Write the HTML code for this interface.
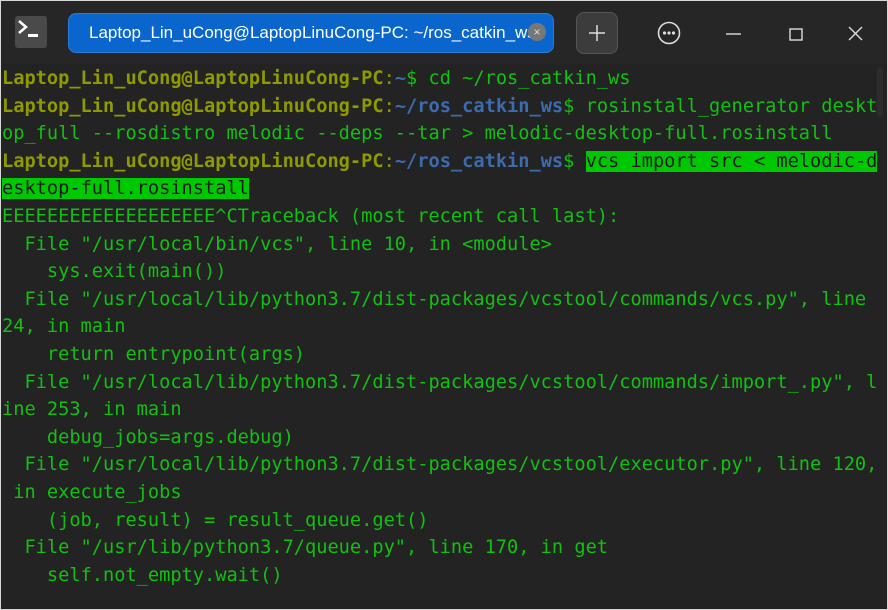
<!DOCTYPE html>
<html><head><meta charset="utf-8"><style>
html,body{margin:0;padding:0;width:888px;height:610px;overflow:hidden;background:#d8d8d8}
.win{position:absolute;left:1px;top:1px;width:886px;height:608px;background:#232323}
.tb{position:absolute;left:0;top:0;width:886px;height:63px;background:#262626}
.ico{position:absolute;left:14px;top:15px;width:32px;height:32px;background:#4a4a4a;border-radius:3px}
.tab{position:absolute;left:67px;top:12px;width:486px;height:40px;background:#0a66cc;border-radius:8px;border:1px solid #2a7ad8;box-sizing:border-box;color:#fff;font:17px "Liberation Sans",sans-serif;line-height:38px;padding-left:20px;white-space:nowrap;overflow:hidden}
.tab .x{position:absolute;left:459px;top:9px;width:18px;height:18px;border-radius:50%;background:#777;color:#ddd;font-size:12px;line-height:18px;text-align:center}
.plus{position:absolute;left:575px;top:11px;width:42px;height:42px;background:#3c3c3c;border:1px solid #555;border-radius:8px;box-sizing:border-box}
.term{position:absolute;left:1px;top:64px;font-family:"DejaVu Sans Mono","Liberation Mono",monospace;font-size:18.65px;line-height:27.6px;color:#12c012;white-space:pre}
.u{color:#8f9a00;font-weight:bold}.p{color:#3d6bb0;font-weight:bold}.c{color:#8f9a00}
.h{background:#00c800;color:#1a1a1a}
.sb{position:absolute;left:876px;top:66px;width:6px;height:50px;background:#2c2c2c;border-radius:3px}
</style></head><body><div class="win">
<div class="tb">
<div class="ico"><svg width="32" height="32"><path d="M4 5 L11 11 L4 17" stroke="#fff" stroke-width="2.5" fill="none"/><rect x="13" y="18" width="10" height="3" fill="#fff"/></svg></div>
<div class="tab">Laptop_Lin_uCong@LaptopLinuCong-PC: ~/ros_catkin_ws<span class="x">×</span></div>
<div class="plus"><svg width="40" height="40"><path d="M20 12V28M12 20H28" stroke="#ddd" stroke-width="1.5"/></svg></div>
<svg style="position:absolute;left:655px;top:19px" width="26" height="26"><circle cx="13" cy="13" r="10.5" stroke="#ddd" stroke-width="1.6" fill="none"/><circle cx="8.5" cy="13" r="1.6" fill="#ddd"/><circle cx="13" cy="13" r="1.6" fill="#ddd"/><circle cx="17.5" cy="13" r="1.6" fill="#ddd"/></svg>
<svg style="position:absolute;left:720px;top:20px" width="160" height="26"><path d="M5 13H20" stroke="#ddd" stroke-width="1.4"/><rect x="69" y="8" width="12" height="11" stroke="#ddd" stroke-width="1.4" fill="none"/><path d="M128 6L141 19M141 6L128 19" stroke="#ddd" stroke-width="1.4"/></svg>
</div>
<div class="sb"></div>
<div class="term"><span class="u">Laptop_Lin_uCong@LaptopLinuCong-PC</span><span class="c">:</span><span class="p">~</span>$ cd ~/ros_catkin_ws
<span class="u">Laptop_Lin_uCong@LaptopLinuCong-PC</span><span class="c">:</span><span class="p">~/ros_catkin_ws</span>$ rosinstall_generator deskt
op_full --rosdistro melodic --deps --tar &gt; melodic-desktop-full.rosinstall
<span class="u">Laptop_Lin_uCong@LaptopLinuCong-PC</span><span class="c">:</span><span class="p">~/ros_catkin_ws</span>$ <span class="h">vcs import src &lt; melodic-d</span>
<span class="h">esktop-full.rosinstall</span>
EEEEEEEEEEEEEEEEEEE^CTraceback (most recent call last):
  File "/usr/local/bin/vcs", line 10, in &lt;module&gt;
    sys.exit(main())
  File "/usr/local/lib/python3.7/dist-packages/vcstool/commands/vcs.py", line
24, in main
    return entrypoint(args)
  File "/usr/local/lib/python3.7/dist-packages/vcstool/commands/import_.py", l
ine 253, in main
    debug_jobs=args.debug)
  File "/usr/local/lib/python3.7/dist-packages/vcstool/executor.py", line 120,
 in execute_jobs
    (job, result) = result_queue.get()
  File "/usr/lib/python3.7/queue.py", line 170, in get
    self.not_empty.wait()</div>
</div></body></html>
